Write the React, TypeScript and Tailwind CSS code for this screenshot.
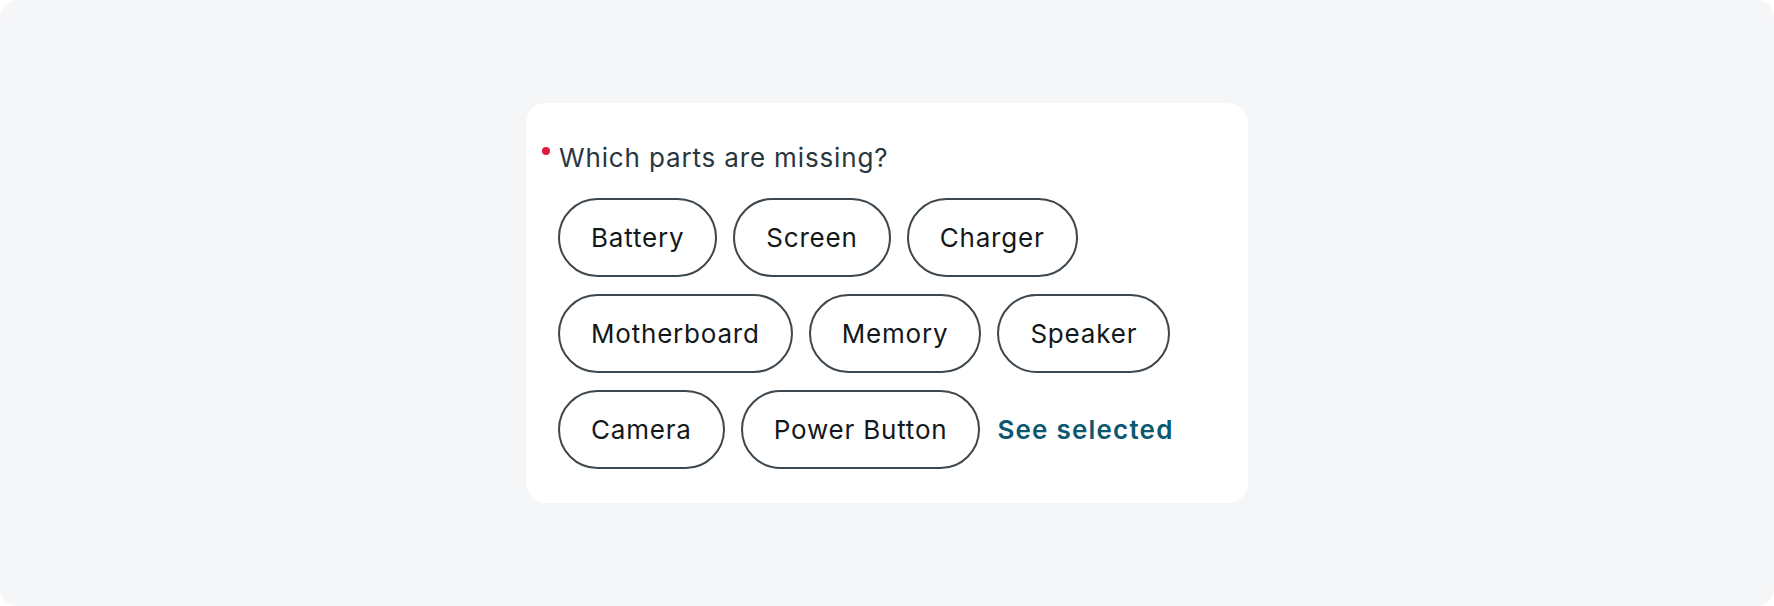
const parts = ['Battery', 'Screen', 'Charger', 'Motherboard', 'Memory', 'Speaker', 'Camera', 'Power Button'];

export default function App() {
  return (
    <div className="w-[1774px] h-[606px] bg-white" style={{ fontFamily: 'Inter, "Noto Sans", sans-serif' }}>
      <div className="w-full h-full rounded-[18px] bg-[#f5f6f8] flex items-center justify-center">
        <div className="w-[722px] bg-white rounded-[20px] pt-[37px] pb-[34px] pl-[16px] pr-[32px]">
          <div className="flex items-start gap-[9px]">
            <span className="mt-[7px] w-[8px] h-[8px] rounded-full bg-[#e3193a] shrink-0" />
            <p className="text-[26px] leading-[36px] tracking-[0.85px] text-[#29363d]">Which parts are missing?</p>
          </div>
          <div className="mt-[22px] ml-[16px] flex flex-wrap items-center gap-x-[16px] gap-y-[17px]">
            {parts.map((p) => (
              <button
                key={p}
                className="h-[79px] px-[31px] rounded-full border-2 border-[#3d474d] text-[26px] leading-[32px] tracking-[0.8px] text-[#13181b] flex items-center"
              >
                {p}
              </button>
            ))}
            <button className="ml-[1px] text-[26px] leading-[32px] font-semibold tracking-[1.2px] text-[#0b5870]">See selected</button>
          </div>
        </div>
      </div>
    </div>
  );
}
